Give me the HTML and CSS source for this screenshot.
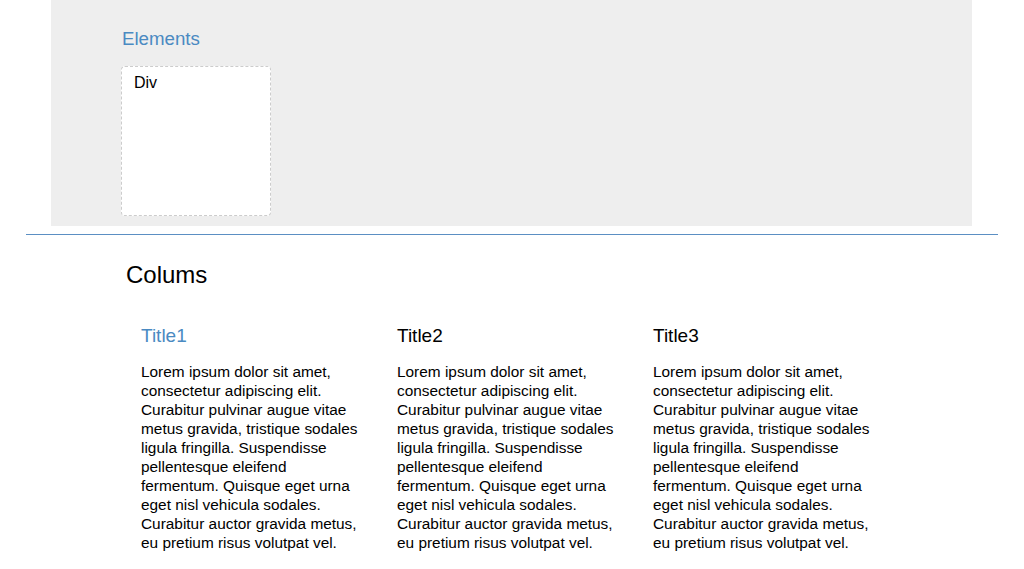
FILE: index.html
```html
<!DOCTYPE html>
<html>
<head>
<meta charset="utf-8">
<link rel="stylesheet" href="styles.css">
</head>
<body>
<div class="page">
  <section class="elements">
    <h2 class="elements-title">Elements</h2>
    <div class="div-box">Div</div>
  </section>
  <div class="divider"></div>
  <section class="columns-section">
    <h1 class="columns-title">Colums</h1>
    <div class="columns">
      <div class="col">
        <h3 class="col-title blue">Title1</h3>
        <p class="col-text">Lorem ipsum dolor sit amet, consectetur adipiscing elit. Curabitur pulvinar augue vitae metus gravida, tristique sodales ligula fringilla. Suspendisse pellentesque eleifend fermentum. Quisque eget urna eget nisl vehicula sodales. Curabitur auctor gravida metus, eu pretium risus volutpat vel.</p>
      </div>
      <div class="col">
        <h3 class="col-title">Title2</h3>
        <p class="col-text">Lorem ipsum dolor sit amet, consectetur adipiscing elit. Curabitur pulvinar augue vitae metus gravida, tristique sodales ligula fringilla. Suspendisse pellentesque eleifend fermentum. Quisque eget urna eget nisl vehicula sodales. Curabitur auctor gravida metus, eu pretium risus volutpat vel.</p>
      </div>
      <div class="col">
        <h3 class="col-title">Title3</h3>
        <p class="col-text">Lorem ipsum dolor sit amet, consectetur adipiscing elit. Curabitur pulvinar augue vitae metus gravida, tristique sodales ligula fringilla. Suspendisse pellentesque eleifend fermentum. Quisque eget urna eget nisl vehicula sodales. Curabitur auctor gravida metus, eu pretium risus volutpat vel.</p>
      </div>
    </div>
  </section>
</div>
</body>
</html>
```
FILE: styles.css
```css
html, body {
  margin: 0;
  padding: 0;
  background: #fff;
  font-family: "Liberation Sans", Arial, sans-serif;
  color: #000;
}
.page {
  padding: 0 26px;
}
.elements {
  margin: 0 26px 0 25px;
  background: #eeeeee;
  padding: 28px 70px 10px 70px;
}
.elements-title {
  margin: 0 0 16px 1px;
  font-size: 18.7px;
  font-weight: normal;
  color: #4a8ac2;
  line-height: 22px;
}
.div-box {
  width: 136px;
  height: 142px;
  background: #fff;
  border: 1px dashed #cccccc;
  border-radius: 4px;
  padding: 6px 0 0 12px;
  font-size: 16px;
  line-height: 19px;
}
.divider {
  margin-top: 8px;
  height: 1px;
  background: #5b8fc3;
}
.columns-section {
  padding: 26px 0 0 100px;
}
.columns-title {
  margin: 0;
  font-size: 24px;
  font-weight: normal;
  line-height: 28px;
}
.columns {
  display: flex;
  gap: 30px;
  margin: 36px 0 0 15px;
}
.col {
  width: 226px;
}
.col-title {
  margin: 0;
  font-size: 19px;
  font-weight: normal;
  line-height: 22px;
}
.col-title.blue {
  color: #4a8ac2;
}
.col-text {
  margin: 15px 0 0 0;
  font-size: 15.4px;
  line-height: 19px;
}
```
